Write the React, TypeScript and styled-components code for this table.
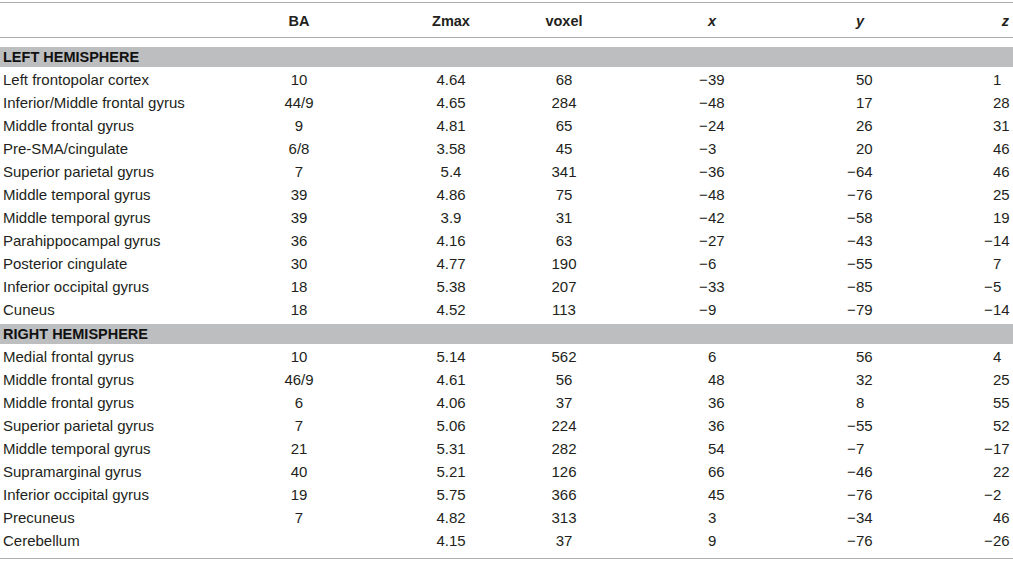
import React from 'react';
import styled, { createGlobalStyle } from 'styled-components';

const GlobalStyle = createGlobalStyle`
  html, body { margin: 0; padding: 0; background: #ffffff; }
  body {
    font-family: "Liberation Sans", Arial, Helvetica, sans-serif;
    color: #231f20;
  }
`;

const COLS = '200px 198px 106px 120px 176px 120px 1fr';

const Page = styled.div`padding-top: 2px; width: 1013px;`;

const Table = styled.div`
  border-top: 1px solid #aeaeae;
  border-bottom: 1px solid #aeaeae;
  padding-bottom: 7px;
`;

const HeaderRow = styled.div`
  display: grid;
  grid-template-columns: ${COLS};
  height: 34px;
  align-items: center;
  border-bottom: 1px solid #aeaeae;
  font-weight: bold;
  font-size: 14.5px;
`;

const HeadCell = styled.div<{ $italic?: boolean; $right?: boolean }>`
  display: flex;
  justify-content: ${(p) => (p.$right ? 'flex-end' : 'center')};
  padding-right: ${(p) => (p.$right ? '4px' : '0')};
  font-style: ${(p) => (p.$italic ? 'italic' : 'normal')};
  padding-top: 2px;
`;

const Section = styled.div<{ $gap: number }>`margin-top: ${(p) => p.$gap}px;`;

const SectionTitle = styled.div`
  height: 20px;
  line-height: 21px;
  background: #bcbec0;
  padding-left: 3px;
  font-weight: bold;
  font-size: 14.5px;
  color: #111;
`;

const Row = styled.div`
  display: grid;
  grid-template-columns: ${COLS};
  height: 23px;
  align-items: center;
  font-size: 15px;
  padding-top: 2px;
  box-sizing: border-box;
`;

const Label = styled.div`padding-left: 3px; white-space: nowrap;`;

const Centered = styled.div`display: flex; justify-content: center;`;

const CoordCell = styled.div<{ $right?: boolean }>`
  display: flex;
  justify-content: ${(p) => (p.$right ? 'flex-end' : 'center')};
  padding-right: ${(p) => (p.$right ? '3px' : '0')};
`;

// minus sign sits in its own slot so the digits line up down the column
const CoordBox = styled.div`
  display: flex;
  width: 26px;
`;

const MinusSlot = styled.span`
  display: inline-block;
  width: 9px;
  flex: none;
`;

type Entry = [string, string, string, string, number, number, number];

const left: Entry[] = [
  ['Left frontopolar cortex', '10', '4.64', '68', -39, 50, 1],
  ['Inferior/Middle frontal gyrus', '44/9', '4.65', '284', -48, 17, 28],
  ['Middle frontal gyrus', '9', '4.81', '65', -24, 26, 31],
  ['Pre-SMA/cingulate', '6/8', '3.58', '45', -3, 20, 46],
  ['Superior parietal gyrus', '7', '5.4', '341', -36, -64, 46],
  ['Middle temporal gyrus', '39', '4.86', '75', -48, -76, 25],
  ['Middle temporal gyrus', '39', '3.9', '31', -42, -58, 19],
  ['Parahippocampal gyrus', '36', '4.16', '63', -27, -43, -14],
  ['Posterior cingulate', '30', '4.77', '190', -6, -55, 7],
  ['Inferior occipital gyrus', '18', '5.38', '207', -33, -85, -5],
  ['Cuneus', '18', '4.52', '113', -9, -79, -14],
];

const right: Entry[] = [
  ['Medial frontal gyrus', '10', '5.14', '562', 6, 56, 4],
  ['Middle frontal gyrus', '46/9', '4.61', '56', 48, 32, 25],
  ['Middle frontal gyrus', '6', '4.06', '37', 36, 8, 55],
  ['Superior parietal gyrus', '7', '5.06', '224', 36, -55, 52],
  ['Middle temporal gyrus', '21', '5.31', '282', 54, -7, -17],
  ['Supramarginal gyrus', '40', '5.21', '126', 66, -46, 22],
  ['Inferior occipital gyrus', '19', '5.75', '366', 45, -76, -2],
  ['Precuneus', '7', '4.82', '313', 3, -34, 46],
  ['Cerebellum', '', '4.15', '37', 9, -76, -26],
];

const Coord: React.FC<{ v: number; right?: boolean }> = ({ v, right }) => (
  <CoordCell $right={right}>
    <CoordBox>
      <MinusSlot>{v < 0 ? '\u2212' : ''}</MinusSlot>
      <span>{Math.abs(v)}</span>
    </CoordBox>
  </CoordCell>
);

const DataRow: React.FC<{ e: Entry }> = ({ e }) => (
  <Row>
    <Label>{e[0]}</Label>
    <Centered>{e[1]}</Centered>
    <Centered>{e[2]}</Centered>
    <Centered>{e[3]}</Centered>
    <Coord v={e[4]} />
    <Coord v={e[5]} />
    <Coord v={e[6]} right />
  </Row>
);

const App: React.FC = () => (
  <Page>
    <GlobalStyle />
    <Table>
      <HeaderRow>
        <div />
        <HeadCell>BA</HeadCell>
        <HeadCell>Zmax</HeadCell>
        <HeadCell>voxel</HeadCell>
        <HeadCell $italic>x</HeadCell>
        <HeadCell $italic>y</HeadCell>
        <HeadCell $italic $right>z</HeadCell>
      </HeaderRow>
      <Section $gap={9}>
        <SectionTitle>LEFT HEMISPHERE</SectionTitle>
        {left.map((e, i) => (
          <DataRow key={i} e={e} />
        ))}
      </Section>
      <Section $gap={4}>
        <SectionTitle>RIGHT HEMISPHERE</SectionTitle>
        {right.map((e, i) => (
          <DataRow key={i} e={e} />
        ))}
      </Section>
    </Table>
  </Page>
);

export default App;
